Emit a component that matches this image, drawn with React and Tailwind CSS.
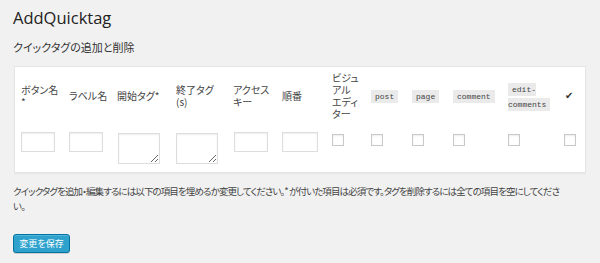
import React from "react";

const jp = "[font-family:'Noto_Sans_CJK_JP','Noto_Sans',sans-serif] [font-feature-settings:'palt']";

function Code({ children }) {
  return (
    <code className="bg-[#eaeaea] text-[#444] [font-family:'Liberation_Mono',monospace] text-[8px] leading-[13.5px] px-[4px] py-[2px]">
      {children}
    </code>
  );
}

function Box() {
  return (
    <input
      type="checkbox"
      className="appearance-none block w-[12px] h-[12px] mt-[2px] border border-[#c9c9c9] bg-white shadow-[inset_0_1px_2px_rgba(0,0,0,0.08)]"
    />
  );
}

function TextIn({ w }) {
  return (
    <input
      type="text"
      className={`block ${w} h-[20px] border border-[#dddddd] bg-white shadow-[inset_0_1px_2px_rgba(0,0,0,0.07)] outline-none`}
    />
  );
}

function Area() {
  return (
    <textarea className="block w-[42px] h-[31px] mt-px border border-[#dddddd] bg-white shadow-[inset_0_1px_2px_rgba(0,0,0,0.07)] outline-none resize" />
  );
}

export default function App() {
  const cols =
    "grid grid-cols-[48px_48px_59px_57px_49px_50px_39px_41px_41px_55px_56px_20px]";
  return (
    <div className="w-[600px] h-[263px] overflow-hidden bg-[#f1f1f1] px-[13px] text-[#444]">
      <h2 className="mt-[6px] h-[24px] leading-[24px] text-[16.5px] font-normal text-[#222] [font-family:'Open_Sans',sans-serif]">
        AddQuicktag
      </h2>
      <h3 className={`mt-[9px] h-[16px] leading-[16px] text-[11px] font-normal text-[#333] ${jp}`}>
        クイックタグの追加と削除
      </h3>
      <div className="mt-[11px] ml-px w-[572px] bg-white border border-[#e5e5e5] shadow-[0_1px_1px_rgba(0,0,0,0.04)] pl-[6px]">
        <div className={`${cols} h-[58px] items-center text-[10px] leading-[12px] whitespace-nowrap ${jp}`}>
          <div>ボタン名<br />*</div>
          <div>ラベル名</div>
          <div>開始タグ*</div>
          <div>終了タグ<br />(s)</div>
          <div>アクセス<br />キー</div>
          <div>順番</div>
          <div>ビジュ<br />アル<br />エディ<br />ター</div>
          <div><Code>post</Code></div>
          <div><Code>page</Code></div>
          <div><Code>comment</Code></div>
          <div className="leading-[13.5px]"><Code>edit-<br />comments</Code></div>
          <div className="pl-px text-[10px] text-[#333] [font-family:'DejaVu_Sans',sans-serif]">✔</div>
        </div>
        <div className={`${cols} items-start pt-[7px] pb-[8px]`}>
          <TextIn w="w-[34px]" />
          <TextIn w="w-[34px]" />
          <div className="pl-px"><Area /></div>
          <Area />
          <div className="pl-px"><TextIn w="w-[34px]" /></div>
          <TextIn w="w-[36px]" />
          <Box />
          <Box />
          <Box />
          <Box />
          <Box />
          <Box />
        </div>
      </div>
      <p className={`mt-[11px] text-[9.5px] leading-[15px] tracking-[-0.9px] whitespace-nowrap ${jp}`}>
        クイックタグを追加・編集するには以下の項目を埋めるか変更してください。* が付いた項目は必須です。タグを削除するには全ての項目を空にしてくださ
        <br />
        い。
      </p>
      <button className={`mt-[20px] block w-[57px] h-[19px] rounded-[3px] bg-[#2ea2cc] border border-[#0074a2] shadow-[inset_0_1px_0_rgba(120,200,230,0.5),0_1px_0_rgba(0,0,0,0.15)] text-white text-[9px] leading-[17px] ${jp}`}>
        変更を保存
      </button>
    </div>
  );
}
